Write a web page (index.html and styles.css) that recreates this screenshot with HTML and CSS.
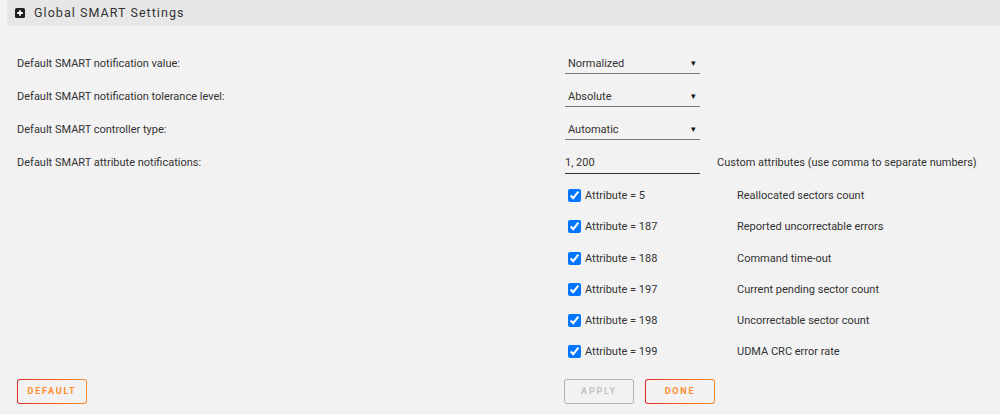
FILE: index.html
```html
<!DOCTYPE html>
<html lang="en">
<head>
    <meta charset="UTF-8">
    <meta name="viewport" content="width=device-width, initial-scale=1.0">
    <title>Global SMART Settings</title>
    <link rel="stylesheet" href="styles.css">
</head>
<body>

    <div class="title-bar">
        <svg class="title-icon" width="10" height="10" viewBox="0 0 10 10">
            <rect x="0" y="0" width="10" height="10" rx="1.5" fill="#222"/>
            <path d="M5 2.2v5.6M2.2 5h5.6" stroke="#fff" stroke-width="1.8"/>
        </svg>
        <span>Global SMART Settings</span>
    </div>

    <form class="settings">
        <div class="row">
            <span class="label">Default SMART notification value:</span>
            <div class="field select">Normalized <span class="caret">&#9662;</span></div>
        </div>
        <div class="row">
            <span class="label">Default SMART notification tolerance level:</span>
            <div class="field select">Absolute <span class="caret">&#9662;</span></div>
        </div>
        <div class="row">
            <span class="label">Default SMART controller type:</span>
            <div class="field select">Automatic <span class="caret">&#9662;</span></div>
        </div>
        <div class="row">
            <span class="label">Default SMART attribute notifications:</span>
            <div class="field text-input">1, 200</div>
            <span class="hint">Custom attributes (use comma to separate numbers)</span>
        </div>

        <div class="attr-list">
            <div class="attr-row">
                <label class="attr"><input type="checkbox" checked> Attribute = 5</label>
                <span>Reallocated sectors count</span>
            </div>
            <div class="attr-row">
                <label class="attr"><input type="checkbox" checked> Attribute = 187</label>
                <span>Reported uncorrectable errors</span>
            </div>
            <div class="attr-row">
                <label class="attr"><input type="checkbox" checked> Attribute = 188</label>
                <span>Command time-out</span>
            </div>
            <div class="attr-row">
                <label class="attr"><input type="checkbox" checked> Attribute = 197</label>
                <span>Current pending sector count</span>
            </div>
            <div class="attr-row">
                <label class="attr"><input type="checkbox" checked> Attribute = 198</label>
                <span>Uncorrectable sector count</span>
            </div>
            <div class="attr-row">
                <label class="attr"><input type="checkbox" checked> Attribute = 199</label>
                <span>UDMA CRC error rate</span>
            </div>
        </div>

        <div class="buttons">
            <button type="button" class="btn">Default</button>
            <div class="btn-group">
                <button type="button" class="btn" disabled>Apply</button>
                <button type="button" class="btn">Done</button>
            </div>
        </div>
    </form>

</body>
</html>
```

FILE: styles.css
```css
body {
    margin: 0;
    font-family: Roboto, "Liberation Sans", sans-serif;
    font-size: 11px;
    color: #333;
    background-color: #f2f2f2;
}
.title-bar {
    margin-left: 7px;
    height: 25px;
    display: flex;
    align-items: center;
    padding-left: 8px;
    background-color: #e7e7e7;
    border-bottom: 1px solid #ebebeb;
    font-size: 12.5px;
    letter-spacing: 1.05px;
    color: #333;
}
.title-icon {
    margin-right: 9px;
}
.settings {
    padding: 21px 17px 0 17px;
}
.row {
    display: grid;
    grid-template-columns: 548px 135px auto;
    align-items: center;
    height: 33px;
}
.field {
    height: 21px;
    display: flex;
    align-items: center;
    box-sizing: border-box;
}
.select {
    justify-content: space-between;
    padding: 0 4px 0 3px;
    border-bottom: 1px solid #777;
}
.caret {
    font-size: 9px;
    color: #111;
}
.text-input {
    height: 22px;
    border-bottom: 1px solid #333;
}
.hint {
    margin-left: 17px;
}
.attr-list {
    margin-top: 1px;
}
.attr-row {
    display: grid;
    grid-template-columns: 172px auto;
    align-items: center;
    height: 31.25px;
    margin-left: 548px;
}
.attr {
    display: flex;
    align-items: center;
}
.attr input {
    margin: 0 4px 0 3px;
    width: 13px;
    height: 13px;
}
.buttons {
    display: flex;
    justify-content: space-between;
    width: 698px;
    margin-top: 11px;
}
.btn-group {
    display: flex;
    gap: 11px;
}
.btn {
    width: 70px;
    height: 25px;
    border: 1.5px solid transparent;
    border-radius: 3px;
    background: linear-gradient(#f2f2f2, #f2f2f2) padding-box,
                linear-gradient(90deg, #e22828, #ff8c2f) border-box;
    color: #ff8c2f;
    font-family: Roboto, "Liberation Sans", sans-serif;
    font-size: 9px;
    font-weight: bold;
    letter-spacing: 1.8px;
    text-transform: uppercase;
    padding: 0;
    cursor: pointer;
}
.btn:disabled {
    background: #f2f2f2;
    border-color: #b0b0b0;
    color: #c2c2c2;
    cursor: default;
}
```
